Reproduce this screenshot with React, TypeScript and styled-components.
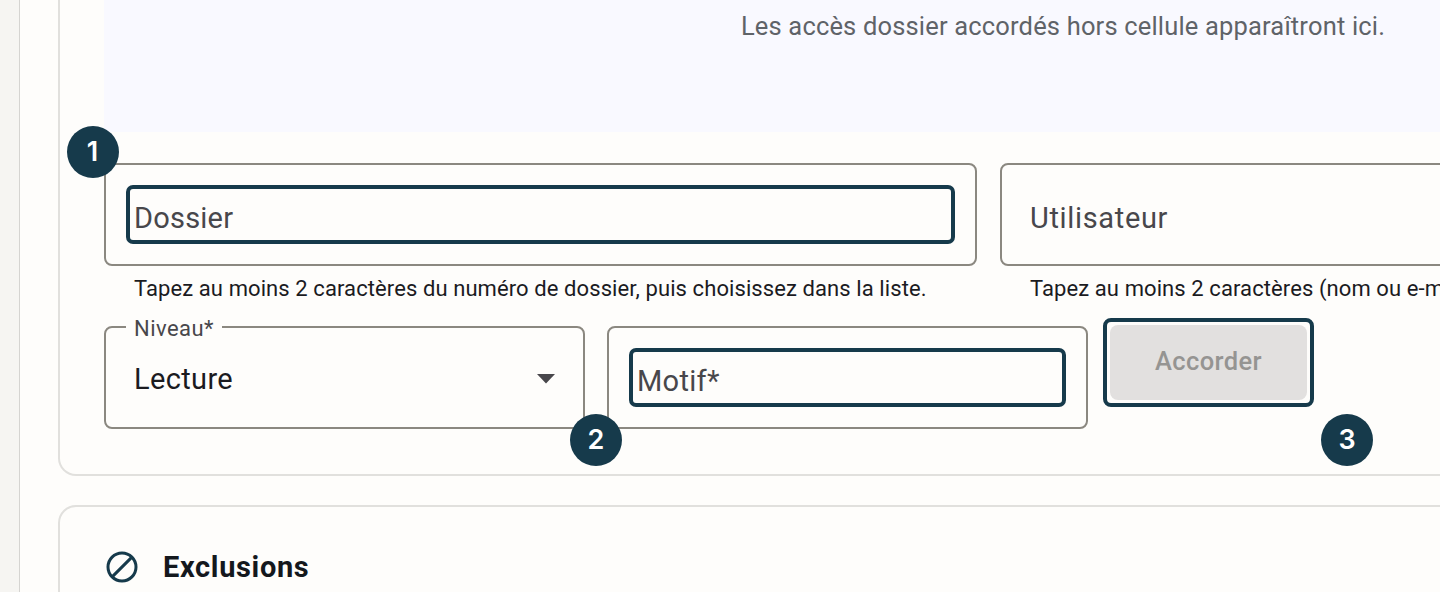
import styled, { createGlobalStyle } from "styled-components";

const GlobalStyle = createGlobalStyle`
  * {
    box-sizing: border-box;
  }

  body {
    margin: 0;
    overflow: hidden;
    background: #fefdfb;
    font-family: Roboto, "Liberation Sans", sans-serif;
  }
`;

const Page = styled.div`
  display: flex;
  width: 1440px;
  height: 592px;
  overflow: hidden;
`;

const Rail = styled.div`
  flex: 0 0 20px;
  background: #f6f5f2;
  border-right: 1px solid #d5d4d1;
`;

const Content = styled.main`
  flex: 0 0 2048px;
  display: flex;
  flex-direction: column;
  gap: 29px;
  padding-left: 38px;
`;

const Card = styled.section<{ $open?: "top" | "bottom" }>`
  flex-shrink: 0;
  width: 2010px;
  padding: 0 44px;
  border: 2px solid #e1e0dd;
  border-radius: 18px;
  ${({ $open }) => $open === "top" && `
    height: 476px;
    border-top: 0;
    border-top-left-radius: 0;
    border-top-right-radius: 0;
  `}
  ${({ $open }) => $open === "bottom" && `
    height: 160px;
    padding-top: 41px;
  `}
`;

const EmptyState = styled.div`
  height: 132px;
  padding-top: 9px;
  margin-bottom: 31px;
  background: #f9f9ff;
  color: #5f6368;
  font-size: 25.5px;
  line-height: 34px;
  text-align: center;
`;

const Row = styled.div<{ $gap: number }>`
  display: flex;
  align-items: flex-start;
  gap: ${({ $gap }) => $gap}px;
`;

const Field = styled.div<{ $width: number }>`
  position: relative;
  flex: 0 0 ${({ $width }) => $width}px;
`;

const Outline = styled.div`
  display: flex;
  align-items: center;
  height: 103px;
  padding: 0 20px;
  border: 2px solid #8b8880;
  border-radius: 8px;
`;

const Control = styled.div<{ $focused?: boolean }>`
  flex: 1;
  display: flex;
  align-items: center;
  height: 59px;
  padding: 7px 4px 0;
  border: 4px solid ${({ $focused }) => ($focused ? "#163a4b" : "transparent")};
  border-radius: 7px;
  color: #48474b;
  font-size: 29px;
  line-height: 40px;
`;

const Value = styled.div`
  flex: 1;
  display: flex;
  align-items: center;
  justify-content: space-between;
  padding: 2px 8px 0;
  color: #1b1b1f;
  font-size: 29px;
  line-height: 40px;
`;

const FloatingLabel = styled.span`
  position: absolute;
  top: -11px;
  left: 22px;
  padding: 0 8px;
  background: #fefdfb;
  color: #48474b;
  font-size: 22px;
  line-height: 28px;
`;

const Helper = styled.p`
  margin: 0;
  height: 60px;
  padding: 8px 0 0 30px;
  color: #1b1b1f;
  font-size: 22px;
  line-height: 30px;
  white-space: nowrap;
`;

const Text = styled.span<{ $tracking?: number }>`
  letter-spacing: ${({ $tracking = 0 }) => $tracking}px;
`;

const ButtonRing = styled.div`
  width: 211px;
  height: 89px;
  margin: -8px 0 0 -7px;
  padding: 3px;
  border: 4px solid #163a4b;
  border-radius: 8px;
`;

const Button = styled.button`
  width: 100%;
  height: 100%;
  padding: 0 0 4px;
  border: 0;
  border-radius: 8px;
  background: #e2e0df;
  color: #959492;
  font: 500 25.5px/34px Roboto, sans-serif;
`;

const Badge = styled.span<{ $x: number; $y: number }>`
  position: absolute;
  left: ${({ $x }) => $x}px;
  top: ${({ $y }) => $y}px;
  width: 52px;
  height: 52px;
  border-radius: 50%;
  background: #163a4b;
  color: #fff;
  font: 600 27px/52px Inter, sans-serif;
  text-align: center;
`;

const Heading = styled.h2`
  display: flex;
  align-items: center;
  gap: 25px;
  margin: 0 0 0 2px;
  color: #14181d;
  font-size: 29px;
  font-weight: 700;
  line-height: 38px;
`;

const App = () => {
  return (
    <Page>
      <GlobalStyle />
      <Rail />
      <Content>
        <Card $open="top">
          <EmptyState>
            <Text $tracking={0.17}>Les accès dossier accordés hors cellule apparaîtront ici.</Text>
          </EmptyState>
          <Row $gap={23}>
            <Field $width={873}>
              <Outline>
                <Control $focused><Text $tracking={0.2}>Dossier</Text></Control>
              </Outline>
              <Helper>
                <Text $tracking={0.09}>
                  Tapez au moins 2 caractères du numéro de dossier, puis choisissez dans la liste.
                </Text>
              </Helper>
              <Badge $x={-37.5} $y={-37.5}>1</Badge>
            </Field>
            <Field $width={873}>
              <Outline>
                <Control><Text $tracking={0.65}>Utilisateur</Text></Control>
              </Outline>
              <Helper>
                <Text $tracking={0.09}>Tapez au moins 2 caractères (nom ou e-mail).</Text>
              </Helper>
            </Field>
          </Row>
          <Row $gap={22}>
            <Field $width={481}>
              <Outline>
                <Value>
                  <Text $tracking={0.35}>Lecture</Text>
                  <svg width="18" height="10" viewBox="0 0 18 10">
                    <path d="M0 0h18L9 9.5z" fill="#48474b" />
                  </svg>
                </Value>
              </Outline>
              <FloatingLabel><Text $tracking={0.45}>Niveau*</Text></FloatingLabel>
            </Field>
            <Field $width={481}>
              <Outline>
                <Control $focused><Text $tracking={0.3}>Motif*</Text></Control>
              </Outline>
              <Badge $x={-37} $y={88}>2</Badge>
            </Field>
            <Field $width={211}>
              <ButtonRing>
                <Button disabled><Text $tracking={0.4}>Accorder</Text></Button>
              </ButtonRing>
              <Badge $x={211} $y={88}>3</Badge>
            </Field>
          </Row>
        </Card>
        <Card $open="bottom">
          <Heading>
            <svg width="32" height="32" viewBox="0 0 32 32" fill="none" stroke="#163a4b" strokeWidth="3">
              <circle cx="16" cy="16" r="14" />
              <path d="M6.1 25.9L25.9 6.1" />
            </svg>
            <Text $tracking={0.65}>Exclusions</Text>
          </Heading>
        </Card>
      </Content>
    </Page>
  );
};

export default App;
